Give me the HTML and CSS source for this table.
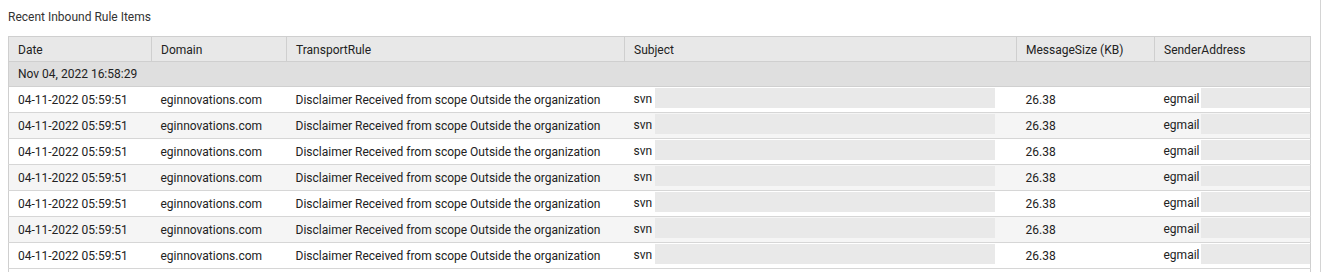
FILE: index.html
```html
<!DOCTYPE html>
<html>
<head>
<meta charset="utf-8">
<link rel="stylesheet" href="styles.css">
</head>
<body>
<div class="page">
  <div class="title">Recent Inbound Rule Items</div>
  <table class="grid">
    <colgroup>
      <col class="c-date"><col class="c-domain"><col class="c-rule"><col class="c-subject"><col class="c-size"><col class="c-sender">
    </colgroup>
    <thead>
      <tr><th>Date</th><th>Domain</th><th>TransportRule</th><th>Subject</th><th>MessageSize (KB)</th><th>SenderAddress</th></tr>
    </thead>
    <tbody>
      <tr class="group"><td colspan="6">Nov 04, 2022 16:58:29</td></tr>
      <tr><td>04-11-2022 05:59:51</td><td>eginnovations.com</td><td>Disclaimer Received from scope Outside the organization</td><td>svn <span class="redact r-subj"></span></td><td>26.38</td><td>egmail<span class="redact r-send"></span></td></tr>
      <tr class="alt"><td>04-11-2022 05:59:51</td><td>eginnovations.com</td><td>Disclaimer Received from scope Outside the organization</td><td>svn <span class="redact r-subj"></span></td><td>26.38</td><td>egmail<span class="redact r-send"></span></td></tr>
      <tr><td>04-11-2022 05:59:51</td><td>eginnovations.com</td><td>Disclaimer Received from scope Outside the organization</td><td>svn <span class="redact r-subj"></span></td><td>26.38</td><td>egmail<span class="redact r-send"></span></td></tr>
      <tr class="alt"><td>04-11-2022 05:59:51</td><td>eginnovations.com</td><td>Disclaimer Received from scope Outside the organization</td><td>svn <span class="redact r-subj"></span></td><td>26.38</td><td>egmail<span class="redact r-send"></span></td></tr>
      <tr><td>04-11-2022 05:59:51</td><td>eginnovations.com</td><td>Disclaimer Received from scope Outside the organization</td><td>svn <span class="redact r-subj"></span></td><td>26.38</td><td>egmail<span class="redact r-send"></span></td></tr>
      <tr class="alt"><td>04-11-2022 05:59:51</td><td>eginnovations.com</td><td>Disclaimer Received from scope Outside the organization</td><td>svn <span class="redact r-subj"></span></td><td>26.38</td><td>egmail<span class="redact r-send"></span></td></tr>
      <tr><td>04-11-2022 05:59:51</td><td>eginnovations.com</td><td>Disclaimer Received from scope Outside the organization</td><td>svn <span class="redact r-subj"></span></td><td>26.38</td><td>egmail<span class="redact r-send"></span></td></tr>
      <tr class="alt empty"><td colspan="6"></td></tr>
    </tbody>
  </table>
</div>
</body>
</html>
```
FILE: styles.css
```css
html, body {
  margin: 0;
  padding: 0;
  background: #fff;
  overflow: hidden;
}
body {
  font-family: Roboto, "Liberation Sans", Arial, sans-serif;
  font-size: 12px;
  color: #333;
}
.page {
  box-sizing: border-box;
  width: 1321px;
  height: 272px;
  border-right: 1px solid #d4d4d4;
  padding: 0 0 0 8px;
}
.title {
  height: 36px;
  line-height: 34px;
  color: #333;
}
.grid {
  border-collapse: collapse;
  table-layout: fixed;
  width: 1302px;
  border: 1px solid #cfcfcf;
}
.c-date { width: 143px; }
.c-domain { width: 135px; }
.c-rule { width: 338px; }
.c-subject { width: 392px; }
.c-size { width: 138px; }
.c-sender { width: 156px; }
th {
  background: #e8e8e8;
  font-weight: normal;
  text-align: left;
  color: #222;
  height: 23px;
  padding: 1px 0 0 9px;
  border-right: 1px solid #cfcfcf;
  border-bottom: 1px solid #cfcfcf;
  white-space: nowrap;
}
td {
  height: 25px;
  padding: 0 0 0 9px;
  border-bottom: 1px solid #d6d6d6;
  white-space: nowrap;
  color: #222;
  overflow: hidden;
}
tr.group td {
  background: #dfdfdf;
  height: 24px;
  border-bottom: 1px solid #d0d0d0;
}
tr.alt td {
  background: #f5f5f5;
}
tr.empty td {
  background: #fff;
}
.redact {
  display: inline-block;
  vertical-align: -5px;
  height: 20px;
  margin-top: -4px;
  background: #e9e9e9;
}
.r-subj {
  width: 340px;
}
.r-send {
  width: 120px;
  margin-left: 1px;
}
```
